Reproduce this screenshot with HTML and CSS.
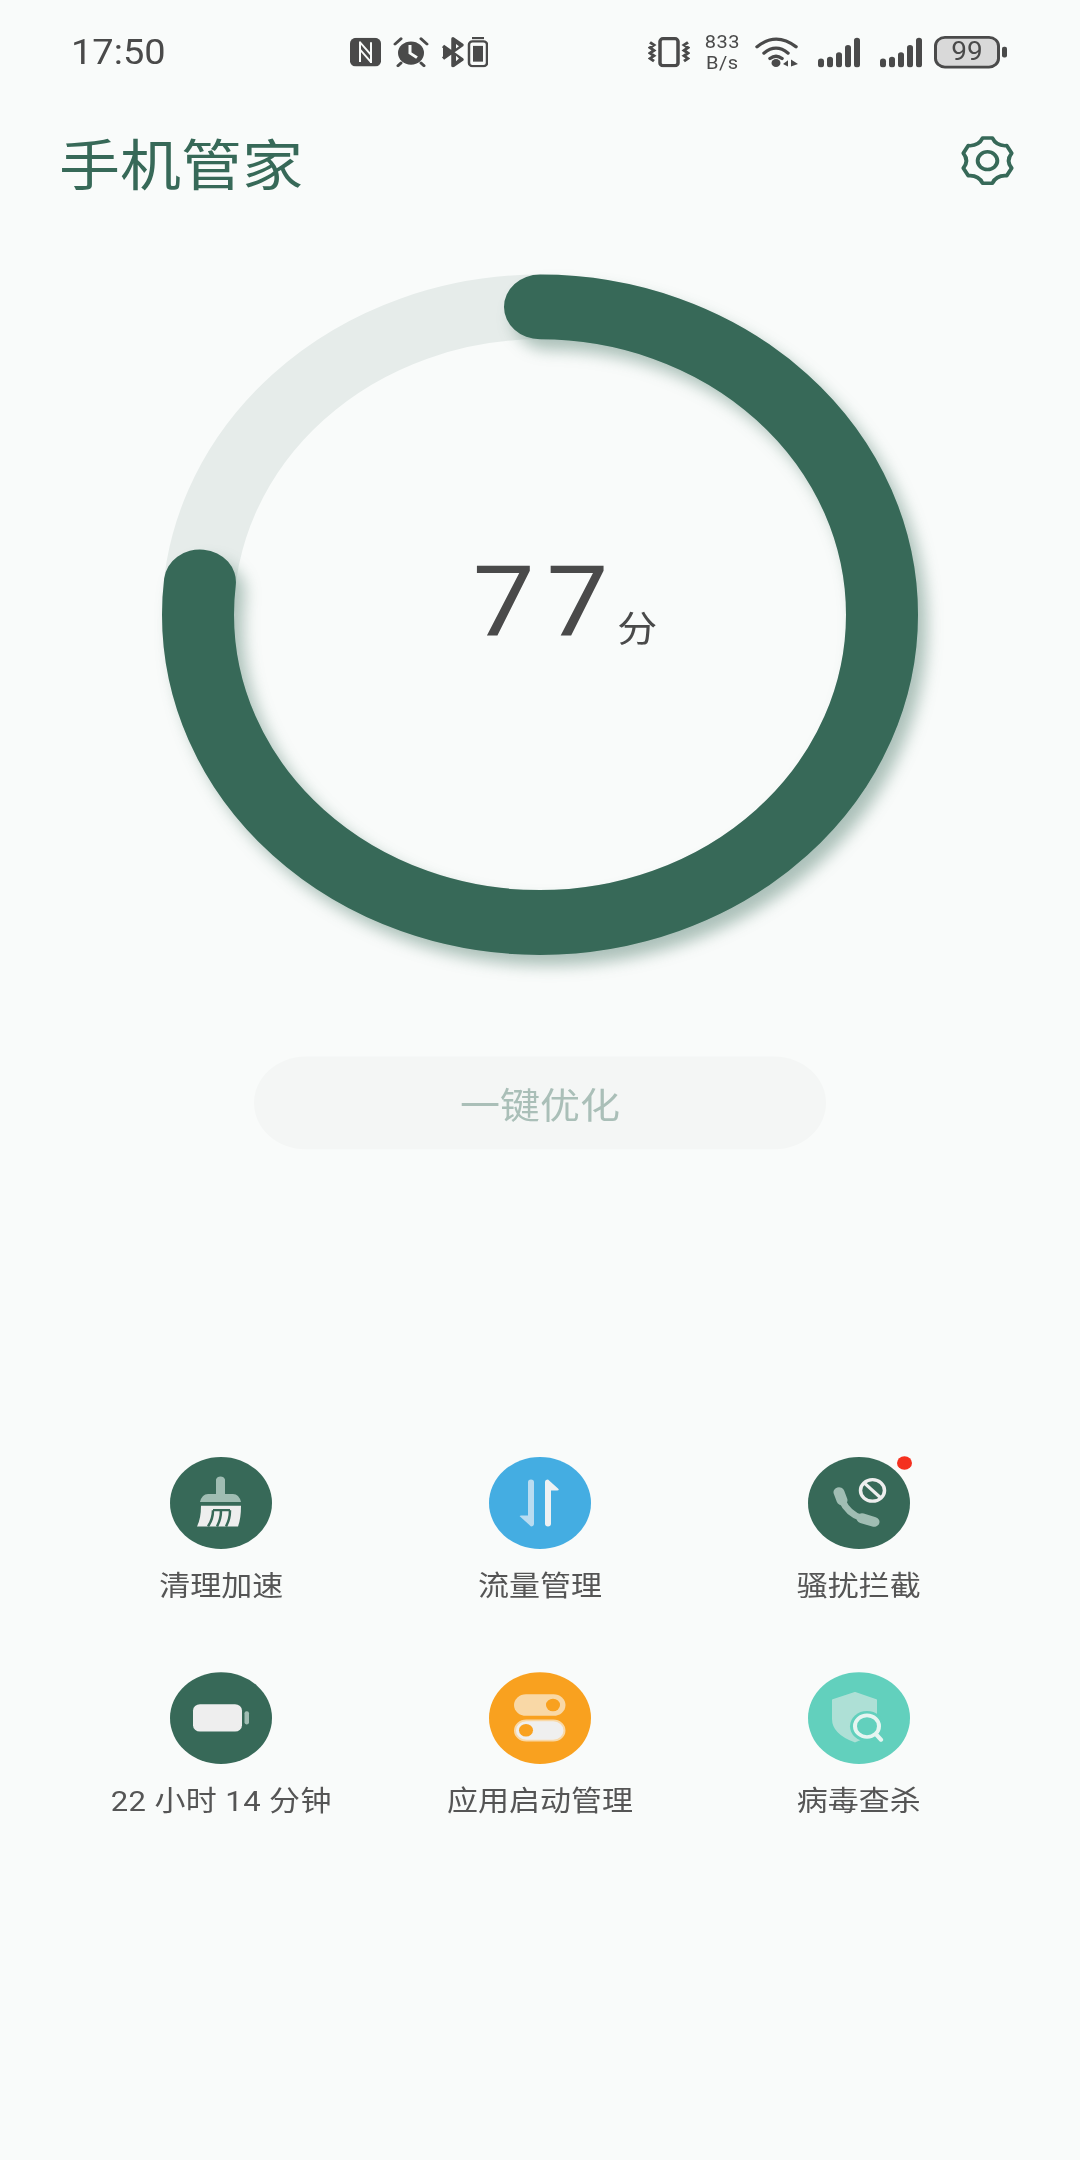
FILE: index.html
```html
<!DOCTYPE html>
<html>
<head>
  <title>手机管家</title>
  <link rel="stylesheet" href="styles.css">
</head>
<body>
  <div class="screen">
    <div class="status-bar">
      <span class="time">17:50</span>
      <div class="status-left">
        <svg width="31" height="32" viewBox="0 0 31 32">
          <rect width="31" height="32" rx="6" fill="#4a4a4a"/>
          <path d="M10 4V27M21 5V28M10 5L21 19M10 13L21 27" fill="none" stroke="#f9fbfa" stroke-width="2"/>
        </svg>
        <svg width="36" height="34" viewBox="0 0 36 34">
          <circle cx="18" cy="18" r="13" fill="#4a4a4a"/>
          <path d="M17 9V18L24 23" fill="none" stroke="#f9fbfa" stroke-width="3"/>
          <path d="M2 8L8 2M34 8L28 2M8 29L5 32M28 29L31 32" fill="none" stroke="#4a4a4a" stroke-width="3" stroke-linecap="round"/>
        </svg>
        <svg width="47" height="34" viewBox="0 0 47 34">
          <path d="M2 10L21 25L12 32V2L21 9L2 24" fill="#4a4a4a" stroke="#4a4a4a" stroke-width="3.500" stroke-linejoin="round"/>
          <path d="M15 8V13L18 10.500ZM15 21V27L18 24Z" fill="#f9fbfa"/>
          <rect x="28" y="5" width="18" height="27.500" rx="3.500" fill="none" stroke="#4a4a4a" stroke-width="2.500"/>
          <rect x="32" y="10" width="10" height="17.500" fill="#4a4a4a"/>
          <rect x="31" y="0" width="12" height="2.500" fill="#4a4a4a"/>
        </svg>
      </div>
      <div class="status-right">
        <svg width="42" height="34" viewBox="0 0 42 34">
          <rect x="12" y="2" width="18" height="30" rx="3" fill="none" stroke="#4a4a4a" stroke-width="3.500"/>
          <path d="M2 6L6 9L2 12L6 15L2 18L6 21L2 24L6 27M40 6L36 9L40 12L36 15L40 18L36 21L40 24L36 27" fill="none" stroke="#4a4a4a" stroke-width="3"/>
        </svg>
        <div class="speed">833<br>B/s</div>
        <svg width="44" height="36" viewBox="0 0 44 36">
          <path d="M2 12Q21 -5 41 12M9 19Q21 8 33 19M15 25Q21 20 27 25" fill="none" stroke="#4a4a4a" stroke-width="3.500" stroke-linecap="round"/>
          <circle cx="21" cy="30" r="4.500" fill="#4a4a4a"/>
          <path d="M28 31L33 27V34ZM36 26L43 31L36 34Z" fill="#4a4a4a"/>
        </svg>
        <svg class="signal" width="42" height="34" viewBox="0 0 42 34">
          <rect x="0" y="24" width="6" height="10" rx="3" fill="#4a4a4a"/>
          <rect x="9" y="22" width="6" height="12" rx="3" fill="#4a4a4a"/>
          <rect x="18" y="17" width="6" height="17" rx="3" fill="#4a4a4a"/>
          <rect x="27" y="9" width="6" height="25" rx="3" fill="#4a4a4a"/>
          <rect x="36" y="1" width="6" height="33" rx="3" fill="#4a4a4a"/>
        </svg>
        <svg class="signal" width="42" height="34" viewBox="0 0 42 34">
          <rect x="0" y="24" width="6" height="10" rx="3" fill="#4a4a4a"/>
          <rect x="9" y="22" width="6" height="12" rx="3" fill="#4a4a4a"/>
          <rect x="18" y="17" width="6" height="17" rx="3" fill="#4a4a4a"/>
          <rect x="27" y="9" width="6" height="25" rx="3" fill="#4a4a4a"/>
          <rect x="36" y="1" width="6" height="33" rx="3" fill="#4a4a4a"/>
        </svg>
        <div class="battery">99</div>
      </div>
    </div>

    <div class="header">
      <h1 class="title">手机管家</h1>
      <svg class="gear" width="55" height="55" viewBox="0 0 56 56">
        <path d="M23.04 2.48H32.96Q37.25 11.98 47.62 10.94L52.58 19.53Q46.5 28 52.58 36.47L47.62 45.06Q37.25 44.02 32.96 53.52H23.04Q18.75 44.02 8.38 45.06L3.42 36.47Q9.5 28 3.42 19.53L8.38 10.94Q18.75 11.98 23.04 2.48Z" fill="none" stroke="#376958" stroke-width="4" stroke-linejoin="round"/>
        <circle cx="28" cy="28" r="10" fill="none" stroke="#376958" stroke-width="4"/>
      </svg>
    </div>

    <div class="ring">
      <svg class="ring-svg" width="756" height="756" viewBox="0 0 756 756">
        <circle class="ring-track" cx="378" cy="378" r="342"/>
        <g class="ring-shadow">
          <circle class="ring-value" cx="378" cy="378" r="342" pathLength="100" transform="rotate(-90 378 378)"/>
        </g>
      </svg>
      <div class="ring-label">
        <div class="score-line"><span class="score">77</span><span class="unit">分</span></div>
      </div>
    </div>

    <div class="optimize">一键优化</div>

    <div class="tools">
      <div class="tool">
        <div class="tool-icon green">
          <svg width="102" height="102" viewBox="0 0 102 102">
            <path d="M46 25a4.700 4.700 0 0 1 9 0V41H63Q69 41 71 50H30Q32 41 38 41H46Z" fill="#a0bdb3"/>
            <path d="M31 54H71Q71 68 68 77H27Q31 68 31 54Z" fill="#eeeeee"/>
            <path d="M43 59H60M43 59Q43 69 38 77M51 59Q51 69 47 77M60 59Q60 69 56 77" fill="none" stroke="#376958" stroke-width="2.500"/>
          </svg>
        </div>
        <span class="tool-name">清理加速</span>
      </div>
      <div class="tool">
        <div class="tool-icon blue">
          <svg width="102" height="102" viewBox="0 0 102 102">
            <path d="M39 28a3 3 0 0 1 6 0V74a3 3 0 0 1 -3 3L31 66Q30 65 32 65H39Z" fill="#b9dcf1"/>
            <path d="M56 28Q56 25 59 25L69 35Q71 37 68 37H62V74a3 3 0 0 1 -6 0Z" fill="#eef1f3"/>
          </svg>
        </div>
        <span class="tool-name">流量管理</span>
      </div>
      <div class="tool">
        <div class="tool-icon green">
          <svg width="102" height="102" viewBox="0 0 102 102">
            <path d="M31 39L34 48M54 68L66 72" fill="none" stroke="#a0bdb3" stroke-width="11" stroke-linecap="round"/>
            <path d="M34 48Q40 63 54 68" fill="none" stroke="#a0bdb3" stroke-width="7"/>
            <circle cx="64.500" cy="37" r="12" fill="#376958" stroke="#eeeeee" stroke-width="3.500"/>
            <path d="M56 28.500L73 45.500" stroke="#eeeeee" stroke-width="3.500"/>
          </svg>
          <span class="badge"></span>
        </div>
        <span class="tool-name">骚扰拦截</span>
      </div>
      <div class="tool">
        <div class="tool-icon green">
          <svg width="102" height="102" viewBox="0 0 102 102">
            <rect x="23" y="35.500" width="49" height="30.500" rx="7" fill="#eeeeee"/>
            <rect x="74.500" y="43.500" width="4.500" height="14.500" rx="2" fill="#a0bdb3"/>
          </svg>
        </div>
        <span class="tool-name time-left">22 小时 14 分钟</span>
      </div>
      <div class="tool">
        <div class="tool-icon orange">
          <svg width="102" height="102" viewBox="0 0 102 102">
            <rect x="25" y="24.500" width="51.500" height="24" rx="12" fill="#f9d8a6"/>
            <circle cx="64" cy="36.500" r="7" fill="#f9a11f"/>
            <rect x="26" y="53.500" width="49.500" height="22.500" rx="11.250" fill="#efefef" stroke="#f9d8a6" stroke-width="2"/>
            <circle cx="37" cy="64.500" r="7" fill="#f9a11f"/>
          </svg>
        </div>
        <span class="tool-name">应用启动管理</span>
      </div>
      <div class="tool">
        <div class="tool-icon teal">
          <svg width="102" height="102" viewBox="0 0 102 102">
            <path d="M47 23L68 31V52Q68 68 47 77Q25 68 25 52V31Z" fill="#aee0d6" stroke="#aee0d6" stroke-width="2" stroke-linejoin="round"/>
            <circle cx="59" cy="60" r="17" fill="#62d0bd"/>
            <path d="M68 69L73 75" stroke="#e6f5f1" stroke-width="4.500" stroke-linecap="round"/>
            <circle cx="59" cy="60" r="12" fill="#62d0bd" stroke="#e6f5f1" stroke-width="4"/>
          </svg>
        </div>
        <span class="tool-name">病毒查杀</span>
      </div>
    </div>
  </div>
</body>
</html>
```

FILE: styles.css
```css
html, body {
  margin: 0;
  height: 2160px;
  overflow: hidden;
  background-color: #f9fbfa;
}

/* the capture is a 1080x2400 phone screen squeezed to 2160 tall */
.screen {
  width: 1080px;
  transform: scaleY(0.9);
  transform-origin: top left;
  font-family: Roboto, "Noto Sans CJK SC", sans-serif;
  color: #4a4a4a;
}

.status-bar {
  height: 116px;
  padding: 0 80px 0 71px;
  display: flex;
  align-items: center;
}
.time {
  font-size: 38px;
}
.status-left {
  margin-left: 184px;
  display: flex;
  align-items: center;
  gap: 12px;
}
.status-right {
  margin-left: auto;
  display: flex;
  align-items: center;
  gap: 14.5px;
}
.status-right .signal {
  margin-left: 5px;
}
.speed {
  font-size: 20px;
  letter-spacing: 0.5px;
  line-height: 24px;
  text-align: center;
}
.battery {
  position: relative;
  width: 60px;
  height: 30px;
  margin-left: -2px;
  border: 3px solid #4a4a4a;
  border-radius: 11px;
  background-color: #d9d9d9;
  font-size: 28px;
  line-height: 30px;
  text-align: center;
}
.battery::after {
  content: "";
  position: absolute;
  right: -10px;
  top: 9px;
  width: 5px;
  height: 12px;
  border-radius: 2px;
  background-color: #4a4a4a;
}

.header {
  height: 125px;
  padding: 0 65px 0 59px;
  display: flex;
  align-items: center;
  justify-content: space-between;
}
.title {
  margin: 0;
  font-size: 61px;
  font-weight: 400;
  color: #376958;
}

.ring {
  position: relative;
  width: 756px;
  height: 756px;
  margin: 64px auto 0;
}
.ring-svg {
  display: block;
  overflow: visible;
}
.ring-track,
.ring-value {
  fill: none;
  stroke-width: 72;
}
.ring-track {
  stroke: #e6ecea;
}
.ring-value {
  stroke: #376958;
  stroke-linecap: round;
  stroke-dasharray: 76.7 100;
}
.ring-shadow {
  filter: drop-shadow(9px 12px 8px rgba(55, 105, 88, 0.4));
}
.ring-label {
  position: absolute;
  inset: 0 0 28px 50px;
  display: flex;
  align-items: center;
  justify-content: center;
}
.score {
  font-size: 110px;
  letter-spacing: 12px;
}
.unit {
  font-size: 40px;
  margin-left: -3px;
  vertical-align: -6px;
}

.optimize {
  width: 572px;
  height: 103px;
  margin: 113px auto 0;
  border-radius: 52px;
  background-color: #f4f6f5;
  color: #aabfb8;
  font-size: 40px;
  display: flex;
  align-items: center;
  justify-content: center;
}

.tools {
  margin-top: 342px;
  padding: 0 62px;
  display: grid;
  grid-template-columns: repeat(3, 1fr);
  row-gap: 75px;
}
.tool {
  display: flex;
  flex-direction: column;
  align-items: center;
}
.tool-icon {
  position: relative;
  width: 102px;
  height: 102px;
  border-radius: 50%;
}
.tool-icon svg {
  display: block;
}
.tool-icon.green { background-color: #376958; }
.tool-icon.blue { background-color: #44ade2; }
.tool-icon.orange { background-color: #f9a11f; }
.tool-icon.teal { background-color: #62d0bd; }
.badge {
  position: absolute;
  top: -1px;
  right: -2px;
  width: 15px;
  height: 15px;
  border-radius: 50%;
  background-color: #f5301f;
}
.tool-name {
  margin-top: 22px;
  font-size: 31px;
  line-height: 40px;
  color: #555;
  white-space: nowrap;
}
.time-left {
  letter-spacing: 0.4px;
}
```
